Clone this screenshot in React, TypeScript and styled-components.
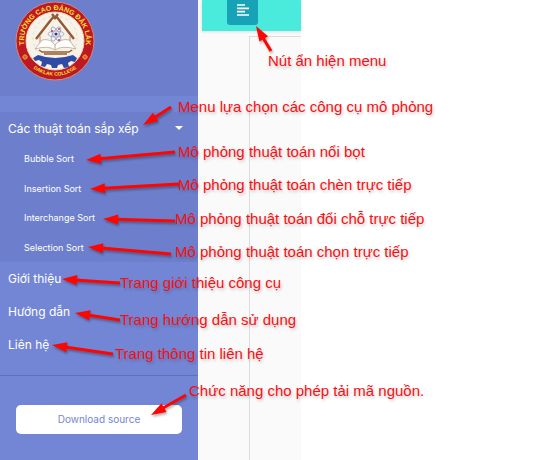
import React from "react";
import styled, { createGlobalStyle } from "styled-components";

const GlobalStyle = createGlobalStyle`
  * { box-sizing: border-box; }
  body {
    margin: 0;
    background: #fff;
    font-family: Inter, "Noto Sans", sans-serif;
  }
  ul { list-style: none; margin: 0; padding: 0; }
`;

const Page = styled.div`
  position: relative;
  display: flex;
  min-height: 100vh;
  overflow: hidden;
`;

const Sidebar = styled.nav`
  flex: 0 0 198px;
  background: #7386d5;
  color: #fff;
`;

const SidebarHeader = styled.header`
  display: flex;
  padding: 0 14px 14px;
  height: 96px;
  background: #6d7fcc;
`;

const Crest = styled.svg`
  display: block;
  width: 82px;
  height: 82px;
`;

const Menu = styled.ul`
  padding: 16px 0 14px;
  border-bottom: 1px solid #5874b4;
`;

const ActiveGroup = styled.li`
  background: #6d7fcc;
`;

const GroupToggle = styled.button`
  display: flex;
  align-items: center;
  justify-content: space-between;
  width: 100%;
  height: 32px;
  padding: 0 15px 0 8px;
  border: 0;
  background: transparent;
  color: inherit;
  font: inherit;
  font-size: 12px;
`;

const Caret = styled.span`
  border-top: 4px solid #fff;
  border-left: 4px solid transparent;
  border-right: 4px solid transparent;
`;

const SubMenu = styled.ul`
  display: grid;
  grid-template-rows: repeat(4, 1fr);
  height: 118px;
`;

const MenuLink = styled.a<{ $nested?: boolean }>`
  display: flex;
  align-items: center;
  height: ${(p) => (p.$nested ? "29px" : "33px")};
  padding-left: ${(p) => (p.$nested ? "24px" : "8px")};
  font-size: ${(p) => (p.$nested ? "9px" : "12px")};
  color: inherit;
  text-decoration: none;
`;

const Download = styled.a`
  display: block;
  margin: 29px 16px;
  border-radius: 5px;
  background: #fff;
  color: #7386d5;
  font-size: 10px;
  line-height: 29px;
  text-align: center;
  text-decoration: none;
`;

const Content = styled.main`
  display: flex;
  flex-direction: column;
  flex: 0 0 103px;
  padding-left: 4px;
  background: #fafafa;
`;

const Topbar = styled.div`
  height: 31px;
  padding-left: 25px;
  background: #4aeadc;
  box-shadow: 0 1px 3px rgba(0, 0, 0, 0.12);
`;

const ToggleButton = styled.button`
  display: flex;
  justify-content: center;
  width: 31px;
  height: 25px;
  padding: 4px 0 0;
  border: 0;
  border-radius: 0 0 3px 3px;
  background: #17a2b8;
`;

const Workspace = styled.section`
  flex: 1;
  margin: 5px 0 0 47px;
  border: solid #dcdcdc;
  border-width: 1px 0 0 1px;
`;

const Arrows = styled.svg`
  position: absolute;
  top: 0;
  left: 0;
  filter: drop-shadow(1px 2px 1px rgba(0, 0, 0, 0.3));
  pointer-events: none;
`;

const Note = styled.span<{ $x: number; $y: number }>`
  position: absolute;
  left: ${(p) => p.$x}px;
  top: ${(p) => p.$y}px;
  color: #f90f12;
  font-family: "Liberation Sans", Arial, sans-serif;
  font-size: 15px;
  line-height: 18px;
  white-space: nowrap;
  text-shadow: 1px 2px 3px rgba(0, 0, 0, 0.22);
`;

const algorithms = ["Bubble Sort", "Insertion Sort", "Interchange Sort", "Selection Sort"];
const pages = ["Giới thiệu", "Hướng dẫn", "Liên hệ"];

const notes = [
  { text: "Nút ẩn hiện menu", x: 268, y: 52, from: [271, 51], to: [256, 26] },
  { text: "Menu lựa chọn các công cụ mô phỏng", x: 178, y: 98, from: [171, 107], to: [143, 125] },
  { text: "Mô phỏng thuật toán nổi bọt", x: 178, y: 143, from: [175, 152], to: [86, 160] },
  { text: "Mô phỏng thuật toán chèn trực tiếp", x: 178, y: 176, from: [179, 184], to: [90, 189] },
  { text: "Mô phỏng thuật toán đổi chỗ trực tiếp", x: 175, y: 210, from: [175, 221], to: [103, 219] },
  { text: "Mô phỏng thuật toán chọn trực tiếp", x: 175, y: 243, from: [171, 254], to: [88, 247] },
  { text: "Trang giới thiệu công cụ", x: 120, y: 274, from: [120, 283], to: [62, 279] },
  { text: "Trang hướng dẫn sử dụng", x: 120, y: 311, from: [120, 320], to: [75, 313] },
  { text: "Trang thông tin liên hệ", x: 115, y: 345, from: [113, 354], to: [52, 345] },
  { text: "Chức năng cho phép tải mã nguồn.", x: 189, y: 382, from: [186, 395], to: [151, 415] },
];

function Arrow({ from, to }: { from: number[]; to: number[] }) {
  const angle = (Math.atan2(to[1] - from[1], to[0] - from[0]) * 180) / Math.PI;
  const length = Math.hypot(to[0] - from[0], to[1] - from[1]);
  return (
    <g transform={`translate(${to[0]} ${to[1]}) rotate(${angle})`}>
      <path d={`M${-length} 0H-13`} stroke="#ff0500" strokeWidth="3" />
      <path d="M0 0L-15 -5V5Z" fill="#ff0500" />
    </g>
  );
}

function CollegeCrest() {
  return (
    <Crest viewBox="0 0 82 82" role="img" aria-label="Trường Cao đẳng Đắk Lắk">
      <defs>
        <path id="crest-top" d="M12 52A31 31 0 1 1 70 52" />
        <path id="crest-bottom" d="M10 57A35 35 0 0 0 72 57" />
      </defs>
      <circle cx="41" cy="41" r="39" fill="#bd1824" stroke="#d28a73" />
      <circle cx="41" cy="41" r="29" fill="#f7f3e9" stroke="#ecd7b2" />
      <circle cx="41" cy="38" r="22" fill="none" stroke="#e8ddca" strokeDasharray="3 3" />
      <g fill="#ffe32e" fontFamily="Liberation Sans" fontWeight="700" textAnchor="middle">
        <text fontSize="7"><textPath href="#crest-top" startOffset="50%">TRƯỜNG CAO ĐẲNG ĐẮK LẮK</textPath></text>
        <text fontSize="5"><textPath href="#crest-bottom" startOffset="50%">DAKLAK COLLEGE</textPath></text>
      </g>
      <g fill="none" stroke="#f2a62c">
        <circle cx="11" cy="57" r="2" /><circle cx="71" cy="57" r="2" />
        <path d="M11 54v6M8 57h6M71 54v6M68 57h6" strokeWidth="0.6" />
      </g>
      <path d="M40 16L22 39M42 16L60 39M38 14l4 5M44 14l-4 5" stroke="#935a35" strokeWidth="2.4" fill="none" />
      <path d="M26 36v7M56 36v7" stroke="#b58a68" />
      <path d="M21 49L28 40Q36 38 41 45Q47 38 55 40L62 49Q48 45 41 50Q34 45 21 49Z" fill="#fff" stroke="#b8a795" strokeWidth="0.8" />
      <path d="M41 45v5" stroke="#b8a795" />
      <g fill="none" stroke="#8c96c4" strokeWidth="0.7">
        <ellipse cx="42" cy="34" rx="8" ry="3" />
        <ellipse cx="42" cy="34" rx="8" ry="3" transform="rotate(60 42 34)" />
        <ellipse cx="42" cy="34" rx="8" ry="3" transform="rotate(120 42 34)" />
      </g>
      <circle cx="42" cy="34" r="1.6" fill="#293c94" />
      <g fill="#d43845"><circle cx="45" cy="29" r="1" /><circle cx="38" cy="31" r="1" /><circle cx="45" cy="40" r="1" /></g>
      <path d="M25 50l3 2h27l3-2M30 54h23" stroke="#9a5c30" strokeWidth="1.5" fill="none" />
      <path d="M24 55Q41 61 59 55L63 58L61 62L57 61L54 63L55 67L50 68L48 64L44 65L43 68H38L37 65L33 64L31 67L27 66L28 62L25 60L21 61L19 58Z" fill="#304ba5" />
    </Crest>
  );
}

export default function App() {
  return (
    <>
      <GlobalStyle />
      <Page>
        <Sidebar>
          <SidebarHeader><CollegeCrest /></SidebarHeader>
          <Menu>
            <ActiveGroup>
              <GroupToggle type="button" aria-expanded="true">Các thuật toán sắp xếp<Caret /></GroupToggle>
              <SubMenu>
                {algorithms.map((name) => <li key={name}><MenuLink href="#" $nested>{name}</MenuLink></li>)}
              </SubMenu>
            </ActiveGroup>
            {pages.map((name) => <li key={name}><MenuLink href="#">{name}</MenuLink></li>)}
          </Menu>
          <Download href="#">Download source</Download>
        </Sidebar>
        <Content>
          <Topbar>
            <ToggleButton type="button" aria-label="Ẩn hiện menu">
              <svg width="12" height="12" viewBox="0 0 12 12" stroke="#fff" strokeWidth="1.7">
                <path d="M0 1h8M0 4.3h12M0 7.6h8M0 11h12" />
              </svg>
            </ToggleButton>
          </Topbar>
          <Workspace />
        </Content>
        <Arrows width="539" height="460" aria-hidden="true">
          {notes.map((note) => <Arrow key={note.text} from={note.from} to={note.to} />)}
        </Arrows>
        {notes.map((note) => <Note key={note.text} $x={note.x} $y={note.y}>{note.text}</Note>)}
      </Page>
    </>
  );
}
